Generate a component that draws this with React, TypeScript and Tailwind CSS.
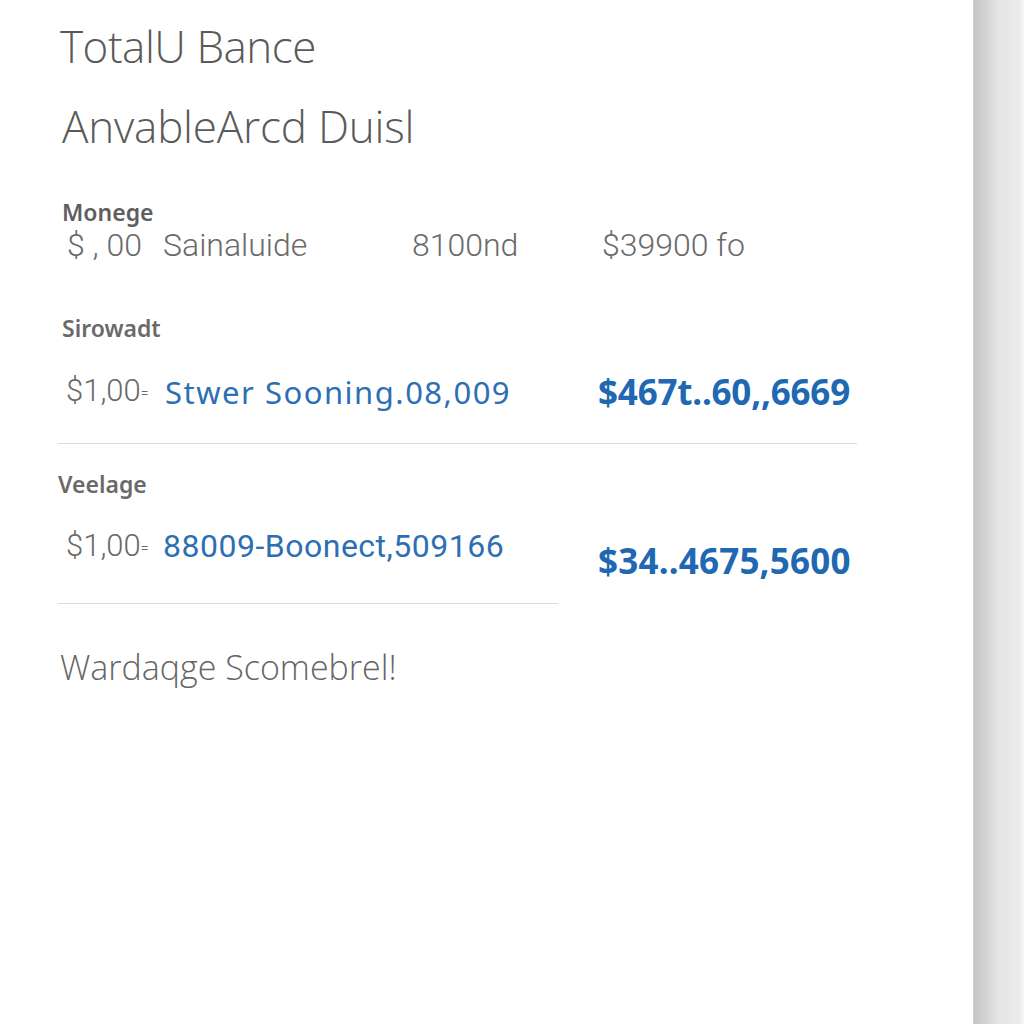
export default function App() {
  return (
    <div className="flex h-[1024px] w-[1024px] overflow-hidden bg-white" style={{ fontFamily: '"Open Sans", "Noto Sans", sans-serif' }}>
      <div className="flex w-[973px] flex-col pl-[58px] pt-[16px]">
        <div className="ml-[2px] text-[44px] font-light leading-[60px] text-[#5a5a5a] tracking-[-0.5px]">TotalU Bance</div>
        <div className="ml-[4px] mt-[20px] text-[44px] font-light leading-[60px] text-[#5a5a5a] tracking-[-0.2px]">AnvableArcd Duisl</div>

        <div className="ml-[4px] mt-[41px] text-[23px] font-semibold leading-[30px] text-[#5e5e5e]" style={{ fontFamily: '"Noto Sans", sans-serif' }}>Monege</div>
        <div className="ml-[9px] flex items-center text-[32px] leading-[36px] text-[#6a6a6a]" style={{ fontFamily: 'Roboto, sans-serif' }}>
          <span className="w-[96px] font-light">$ , 00</span>
          <span className="w-[249px] font-light">Sainaluide</span>
          <span className="w-[190px] font-light">8100nd</span>
          <span className="font-light">$39900 fo</span>
        </div>

        <div className="ml-[4px] mt-[50px] text-[23px] font-semibold leading-[30px] text-[#6a6a6a]" style={{ fontFamily: '"Noto Sans", sans-serif' }}>Sirowadt</div>
        <div className="mt-[29px] flex h-[40px] w-[800px] items-center">
          <span className="ml-[8px] w-[99px] text-[31px] font-light leading-[40px] text-[#6a6a6a]" style={{ fontFamily: 'Roboto, sans-serif' }}>$1,00<span className="align-middle text-[14px]">=</span></span>
          <span className="w-[433px] text-[31px] leading-[40px] tracking-[1.5px] text-[#2d6fb3]" style={{ fontFamily: '"Noto Sans", sans-serif' }}>Stwer Sooning.08,009</span>
          <span className="text-[35px] font-bold leading-[40px] tracking-[-0.2px] text-[#2068b2]" style={{ fontFamily: '"Noto Sans", sans-serif' }}>$467t..60,,6669</span>
        </div>
        <div className="mt-[31px] h-[1px] w-[799px] bg-[#dcdcdc]" />

        <div className="mt-[25px] text-[23px] font-semibold leading-[30px] text-[#6a6a6a]" style={{ fontFamily: '"Noto Sans", sans-serif' }}>Veelage</div>
        <div className="mt-[27px] flex w-[800px] items-start">
          <span className="ml-[8px] w-[97px] text-[31px] font-light leading-[40px] text-[#6a6a6a]" style={{ fontFamily: 'Roboto, sans-serif' }}>$1,00<span className="align-middle text-[14px]">=</span></span>
          <span className="w-[435px] text-[32px] leading-[40px] tracking-[0.5px] text-[#2d6fb3]" style={{ fontFamily: 'Roboto, sans-serif' }}>88009-Boonect,509166</span>
          <span className="mt-[15px] text-[35px] font-bold leading-[40px] tracking-[0.2px] text-[#2068b2]" style={{ fontFamily: '"Noto Sans", sans-serif' }}>$34..4675,5600</span>
        </div>
        <div className="mt-[22px] h-[1px] w-[500px] bg-[#dcdcdc]" />

        <div className="ml-[2px] mt-[41px] text-[34px] font-light leading-[44px] text-[#666666]">Wardaqge Scomebrel!</div>
      </div>
      <div className="h-full w-[51px] border-l border-[#d0d0d0] bg-gradient-to-r from-[#c4c4c4] via-[#e6e6e6] to-[#ececec]">
        <div className="ml-auto h-full w-[3px] bg-[#f4f4f4]" />
      </div>
    </div>
  );
}
